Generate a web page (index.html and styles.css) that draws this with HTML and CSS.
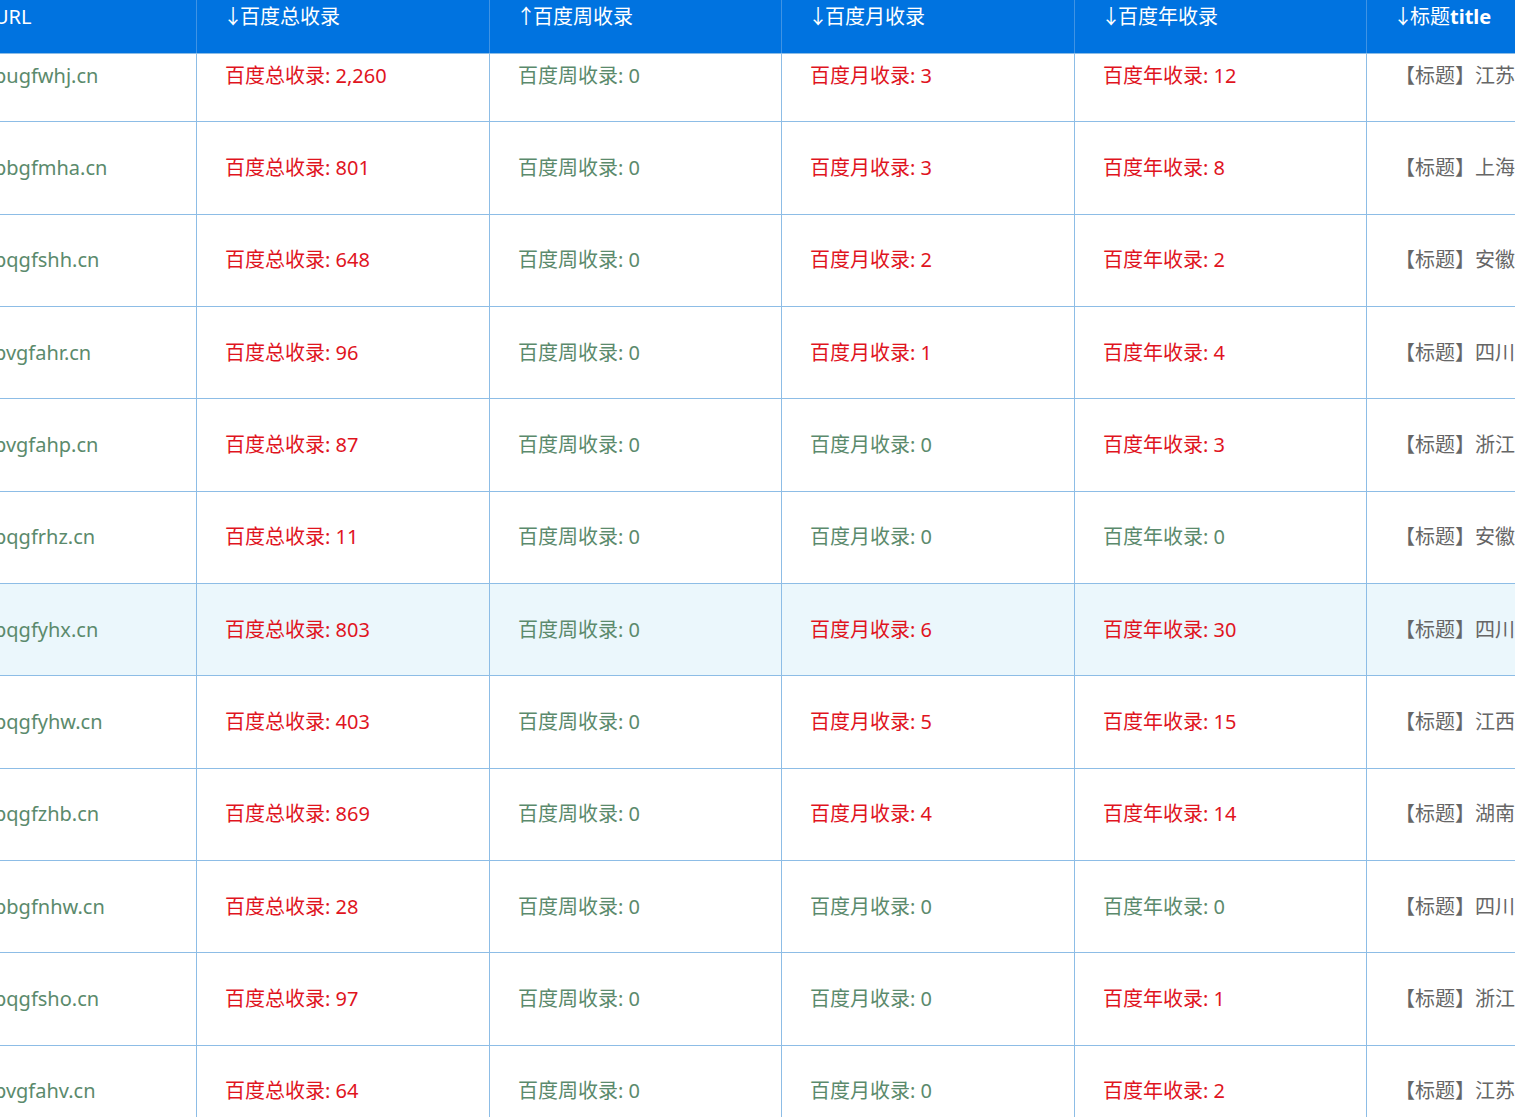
FILE: index.html
```html
<!DOCTYPE html>
<html lang="zh-CN">
<head>
<meta charset="utf-8">
<title>收录</title>
<link rel="stylesheet" href="styles.css">
</head>
<body>
<div class="viewport">
  <div class="grid">
    <div class="head">
      <div class="hc">URL</div>
      <div class="hc"><span class="ar">↓</span>百度总收录</div>
      <div class="hc"><span class="ar">↑</span>百度周收录</div>
      <div class="hc"><span class="ar">↓</span>百度月收录</div>
      <div class="hc"><span class="ar">↓</span>百度年收录</div>
      <div class="hc"><span class="ar">↓</span>标题<b class="bold">title</b></div>
    </div>
    <div class="rows">
      <div class="row"><div class="c url">pugfwhj.cn</div><div class="c red">百度总收录: 2,260</div><div class="c grn">百度周收录: 0</div><div class="c red">百度月收录: 3</div><div class="c red">百度年收录: 12</div><div class="c ttl">【标题】江苏</div></div>
      <div class="row"><div class="c url">pbgfmha.cn</div><div class="c red">百度总收录: 801</div><div class="c grn">百度周收录: 0</div><div class="c red">百度月收录: 3</div><div class="c red">百度年收录: 8</div><div class="c ttl">【标题】上海</div></div>
      <div class="row"><div class="c url">pqgfshh.cn</div><div class="c red">百度总收录: 648</div><div class="c grn">百度周收录: 0</div><div class="c red">百度月收录: 2</div><div class="c red">百度年收录: 2</div><div class="c ttl">【标题】安徽</div></div>
      <div class="row"><div class="c url">pvgfahr.cn</div><div class="c red">百度总收录: 96</div><div class="c grn">百度周收录: 0</div><div class="c red">百度月收录: 1</div><div class="c red">百度年收录: 4</div><div class="c ttl">【标题】四川</div></div>
      <div class="row"><div class="c url">pvgfahp.cn</div><div class="c red">百度总收录: 87</div><div class="c grn">百度周收录: 0</div><div class="c grn">百度月收录: 0</div><div class="c red">百度年收录: 3</div><div class="c ttl">【标题】浙江</div></div>
      <div class="row"><div class="c url">pqgfrhz.cn</div><div class="c red">百度总收录: 11</div><div class="c grn">百度周收录: 0</div><div class="c grn">百度月收录: 0</div><div class="c grn">百度年收录: 0</div><div class="c ttl">【标题】安徽</div></div>
      <div class="row hl"><div class="c url">pqgfyhx.cn</div><div class="c red">百度总收录: 803</div><div class="c grn">百度周收录: 0</div><div class="c red">百度月收录: 6</div><div class="c red">百度年收录: 30</div><div class="c ttl">【标题】四川</div></div>
      <div class="row"><div class="c url">pqgfyhw.cn</div><div class="c red">百度总收录: 403</div><div class="c grn">百度周收录: 0</div><div class="c red">百度月收录: 5</div><div class="c red">百度年收录: 15</div><div class="c ttl">【标题】江西</div></div>
      <div class="row"><div class="c url">pqgfzhb.cn</div><div class="c red">百度总收录: 869</div><div class="c grn">百度周收录: 0</div><div class="c red">百度月收录: 4</div><div class="c red">百度年收录: 14</div><div class="c ttl">【标题】湖南</div></div>
      <div class="row"><div class="c url">pbgfnhw.cn</div><div class="c red">百度总收录: 28</div><div class="c grn">百度周收录: 0</div><div class="c grn">百度月收录: 0</div><div class="c grn">百度年收录: 0</div><div class="c ttl">【标题】四川</div></div>
      <div class="row"><div class="c url">pqgfsho.cn</div><div class="c red">百度总收录: 97</div><div class="c grn">百度周收录: 0</div><div class="c grn">百度月收录: 0</div><div class="c red">百度年收录: 1</div><div class="c ttl">【标题】浙江</div></div>
      <div class="row"><div class="c url">pvgfahv.cn</div><div class="c red">百度总收录: 64</div><div class="c grn">百度周收录: 0</div><div class="c grn">百度月收录: 0</div><div class="c red">百度年收录: 2</div><div class="c ttl">【标题】江苏</div></div>
    </div>
  </div>
</div>
</body>
</html>
```

FILE: styles.css
```css
html, body {
  margin: 0;
  padding: 0;
  background: #ffffff;
}
.viewport {
  width: 1515px;
  height: 1117px;
  overflow: hidden;
  font-family: "Noto Sans", "Noto Sans CJK SC", sans-serif;
  font-size: 20px;
}
.grid {
  margin-left: -34px;
  width: 1800px;
}
.head, .row {
  display: grid;
  grid-template-columns: 231px 293px 292px 293px 292px 399px;
}
.head {
  position: relative;
  z-index: 2;
  background: #0073e0;
  height: 54px;
  border-bottom: 1px solid #8dbde6;
  box-sizing: border-box;
}
.hc {
  color: #ffffff;
  padding: 4px 0 0 28px;
  line-height: 26px;
  border-right: 1px solid #3f93e4;
  white-space: nowrap;
}
.ar {
  margin-left: -2px;
  letter-spacing: -3px;
}
.bold {
  font-weight: 700;
}
.rows {
  position: relative;
  z-index: 1;
  margin-top: -24px;
}
.row {
  height: 92.33px;
  box-sizing: border-box;
  border-bottom: 1px solid #8dbde6;
  background: #ffffff;
}
.row.hl {
  background: #ebf7fc;
}
.c {
  display: flex;
  align-items: center;
  padding-left: 28px;
  border-right: 1px solid #8dbde6;
  white-space: nowrap;
  line-height: 24px;
}
.url { color: #5b8a6c; }
.red { color: #e0141e; }
.grn { color: #5b8a6c; }
.ttl { color: #666666; }
```
